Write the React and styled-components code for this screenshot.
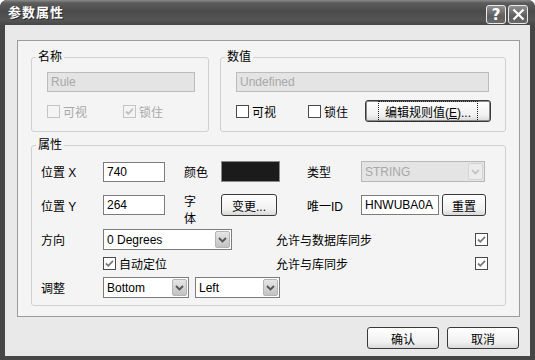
import React from "react";
import styled, { createGlobalStyle } from "styled-components";

const GlobalStyle = createGlobalStyle`
    html, body {
        margin: 0;
        padding: 0;
        background: #ffffff;
    }
    body {
        font-family: "Liberation Sans", "Noto Sans CJK SC", sans-serif;
        font-size: 12px;
        color: #000;
    }
`;

const Check = ({ color = "#7a7a7a" }) => (
    <svg width="11" height="11" viewBox="0 0 11 11">
        <path d="M2 5.5 L4.3 7.8 L9 2.8" fill="none" stroke={color} strokeWidth="1.8" />
    </svg>
);

const Chevron = ({ color = "#444" }) => (
    <svg width="9" height="6" viewBox="0 0 9 6">
        <path d="M1 1 L4.5 4.5 L8 1" fill="none" stroke={color} strokeWidth="1.8" />
    </svg>
);

const CheckBox = ({ checked, disabled, label }) => (
    <CheckItem $disabled={disabled}>
        <Box $disabled={disabled}>
            {checked && <Check color={disabled ? "#bdbdbd" : "#7a7a7a"} />}
        </Box>
        {label && <span>{label}</span>}
    </CheckItem>
);

const Select = ({ value, width, disabled }) => (
    <SelectBox $width={width} $disabled={disabled}>
        <span>{value}</span>
        <ArrowButton $disabled={disabled}>
            <Chevron color={disabled ? "#c4c4c4" : "#555"} />
        </ArrowButton>
    </SelectBox>
);

const App = () => {
    return (
    <>
        <GlobalStyle />
        <Window>
            <TitleBar>
                <Title>参数属性</Title>
                <TitleButtons>
                    <CaptionButton>?</CaptionButton>
                    <CaptionButton>
                        <svg width="13" height="13" viewBox="0 0 13 13">
                            <path d="M1.5 1.5 L11.5 11.5 M11.5 1.5 L1.5 11.5" stroke="#fff" strokeWidth="2.2" />
                        </svg>
                    </CaptionButton>
                </TitleButtons>
            </TitleBar>

            <Body>
                <Panel>
                    <TopRow>
                        <Group>
                            <Legend>名称</Legend>
                            <GroupBody $pad="8px 12px 9px 15px">
                                <TextField $width={148} $disabled readOnly value="Rule" />
                                <CheckRow>
                                    <CheckCell $width={76}>
                                        <CheckBox disabled label="可视" />
                                    </CheckCell>
                                    <CheckBox disabled checked label="锁住" />
                                </CheckRow>
                            </GroupBody>
                        </Group>

                        <Group>
                            <Legend>数值</Legend>
                            <GroupBody $pad="8px 14px 9px 15px">
                                <TextField $width={253} $disabled readOnly value="Undefined" />
                                <CheckRow>
                                    <CheckCell $width={72}>
                                        <CheckBox label="可视" />
                                    </CheckCell>
                                    <CheckCell $width={53}>
                                        <CheckBox label="锁住" />
                                    </CheckCell>
                                    <Button $width={126} $default>
                                        <span>编辑规则值(<u>E</u>)...</span>
                                    </Button>
                                </CheckRow>
                            </GroupBody>
                        </Group>
                    </TopRow>

                    <Group>
                        <Legend>属性</Legend>
                        <GroupBody $pad="9px 10px 7px 9px">
                            <PropGrid>
                                <Label>位置 X</Label>
                                <TextField $width={62} readOnly value="740" />
                                <Label $col={4}>颜色</Label>
                                <Swatch />
                                <Label $col={7}>类型</Label>
                                <Select value="STRING" width={124} disabled />

                                <Label>位置 Y</Label>
                                <TextField $width={62} readOnly value="264" />
                                <StackedLabel $col={4}>字体</StackedLabel>
                                <Button $width={56}>变更...</Button>
                                <Label $col={7}>唯一ID</Label>
                                <InlineGroup>
                                    <TextField $width={78} readOnly value="HNWUBA0A" />
                                    <Button $width={44}>重置</Button>
                                </InlineGroup>
                            </PropGrid>

                            <OptionGrid>
                                <Label>方向</Label>
                                <Select value="0 Degrees" width={129} />
                                <Label>允许与数据库同步</Label>
                                <CheckBox checked />

                                <CheckCell $col={2}>
                                    <CheckBox checked label="自动定位" />
                                </CheckCell>
                                <Label>允许与库同步</Label>
                                <CheckBox checked />

                                <Label>调整</Label>
                                <InlineGroup $gap={6}>
                                    <Select value="Bottom" width={86} />
                                    <Select value="Left" width={85} />
                                </InlineGroup>
                            </OptionGrid>
                        </GroupBody>
                    </Group>
                </Panel>

                <Footer>
                    <Button $width={72}>确认</Button>
                    <Button $width={72}>取消</Button>
                </Footer>
            </Body>
        </Window>
    </>
    );
}

const Window = styled.div`
    width: 535px;
    height: 360px;
    display: flex;
    flex-direction: column;
    background: #464646;
    border-radius: 7px 7px 0 0;
    overflow: hidden;
`;

const TitleBar = styled.div`
    height: 25px;
    flex: none;
    display: flex;
    align-items: flex-start;
    padding: 0 7px 0 8px;
    background: linear-gradient(180deg, #8a8a8a 0%, #5c5c5c 12%, #4b4b4b 45%, #555555 80%, #474747 100%);
`;

const Title = styled.div`
    margin-top: 5px;
    font-size: 13px;
    font-weight: bold;
    line-height: 16px;
    color: #fff;
    text-shadow: 1px 1px 0 #2a2a2a;
    letter-spacing: 1px;
`;

const TitleButtons = styled.div`
    margin-left: auto;
    margin-top: 5px;
    display: flex;
    gap: 2px;
`;

const CaptionButton = styled.div`
    width: 20px;
    height: 19px;
    box-sizing: border-box;
    border: 1px solid #eaeaea;
    border-radius: 3px;
    background: linear-gradient(180deg, #909090, #5e5e5e 60%, #6a6a6a);
    display: flex;
    align-items: center;
    justify-content: center;
    color: #fff;
    font-family: "DejaVu Sans", sans-serif;
    font-size: 15px;
    font-weight: bold;
`;

const Body = styled.div`
    flex: 1;
    margin: 0 5px 4px;
    background: #e9e9e9;
    padding: 15px 10px 0 12px;
    display: flex;
    flex-direction: column;
`;

const Panel = styled.div`
    height: 277px;
    box-sizing: border-box;
    border: 1px solid #9c9c9c;
    background: #f4f4f4;
    padding: 9px 13px 0 13px;
    display: flex;
    flex-direction: column;
    gap: 6px;
`;

const TopRow = styled.div`
    display: grid;
    grid-template-columns: 178px 1fr;
    column-gap: 11px;
`;

const Group = styled.fieldset`
    margin: 0;
    padding: 0;
    min-width: 0;
    border: 1px solid #d0d0d0;
    border-radius: 3px;
`;

const Legend = styled.legend`
    margin-left: 4px;
    padding: 0 2px;
    line-height: 14px;
    font-size: 12px;
`;

const GroupBody = styled.div`
    padding: ${p => p.$pad};
    display: flex;
    flex-direction: column;
`;

const TextField = styled.input`
    box-sizing: border-box;
    width: ${p => p.$width}px;
    height: 20px;
    margin: 0;
    padding: 0 3px;
    font: inherit;
    font-size: 12px;
    outline: none;
    border: 1px solid ${p => (p.$disabled ? "#bcbcbc" : "#7c7c7c")};
    background: ${p => (p.$disabled ? "#e4e4e4" : "#ffffff")};
    color: ${p => (p.$disabled ? "#a8a8a8" : "#000")};
`;

const CheckRow = styled.div`
    margin-top: 8px;
    height: 22px;
    display: flex;
    align-items: center;
`;

const CheckCell = styled.div`
    width: ${p => (p.$width ? `${p.$width}px` : "auto")};
    grid-column: ${p => p.$col || "auto"};
    display: flex;
    align-items: center;
`;

const CheckItem = styled.label`
    display: flex;
    align-items: center;
    gap: 3px;
    color: ${p => (p.$disabled ? "#a8a8a8" : "#000")};
`;

const Box = styled.span`
    width: 13px;
    height: 13px;
    box-sizing: border-box;
    border: 1px solid ${p => (p.$disabled ? "#c4c4c4" : "#4a4a4a")};
    background: ${p => (p.$disabled ? "#f4f4f4" : "#ffffff")};
    display: flex;
    align-items: center;
    justify-content: center;
`;

const Button = styled.div`
    width: ${p => p.$width}px;
    height: 22px;
    box-sizing: border-box;
    border: 1px solid #3a3a3a;
    border-radius: 3px;
    background: linear-gradient(180deg, #ffffff 0%, #f1f1f1 70%, #d9d9d9 100%);
    box-shadow: ${p => (p.$default ? "inset 0 0 0 1px #8a8a8a" : "none")};
    display: flex;
    align-items: center;
    justify-content: center;
    margin-left: ${p => (p.$default ? "auto" : "0")};

    > span {
        padding: 1px 6px;
        border: 1px dotted ${p => (p.$default ? "#222" : "transparent")};
    }
`;

const PropGrid = styled.div`
    display: grid;
    grid-template-columns: 62px 62px 19px 37px 59px 27px 54px 125px;
    grid-template-rows: 21px 22px;
    row-gap: 12px;
    align-items: center;
`;

const OptionGrid = styled.div`
    margin-top: 13px;
    display: grid;
    grid-template-columns: 62px 173px 199px 13px;
    grid-template-rows: 21px 13px 21px;
    row-gap: 7px;
    align-items: center;
`;

const Label = styled.div`
    grid-column: ${p => p.$col || "auto"};
    white-space: nowrap;
`;

const StackedLabel = styled.div`
    grid-column: ${p => p.$col || "auto"};
    align-self: start;
    width: 13px;
    line-height: 17px;
`;

const Swatch = styled.div`
    height: 21px;
    box-sizing: border-box;
    border: 1px solid #8a8a8a;
    background: #1b1b1b;
`;

const InlineGroup = styled.div`
    display: flex;
    align-items: center;
    gap: ${p => p.$gap || 3}px;
`;

const SelectBox = styled.div`
    width: ${p => p.$width}px;
    height: 21px;
    box-sizing: border-box;
    border: 1px solid ${p => (p.$disabled ? "#b8b8b8" : "#7c7c7c")};
    background: ${p => (p.$disabled ? "#e4e4e4" : "#ffffff")};
    color: ${p => (p.$disabled ? "#a8a8a8" : "#000")};
    display: flex;
    align-items: center;
    padding: 1px 1px 1px 3px;
    flex: none;

    > span {
        flex: 1;
        white-space: nowrap;
    }
`;

const ArrowButton = styled.div`
    width: 15px;
    height: 17px;
    box-sizing: border-box;
    border: 1px solid ${p => (p.$disabled ? "#d4d4d4" : "#b4b4b4")};
    border-radius: 2px;
    background: ${p => (p.$disabled ? "#ececec" : "linear-gradient(180deg, #e6e6e6, #c2c2c2)")};
    display: flex;
    align-items: center;
    justify-content: center;
`;

const Footer = styled.div`
    margin-top: 10px;
    margin-right: 1px;
    display: flex;
    justify-content: flex-end;
    gap: 8px;
`;

export default App;
